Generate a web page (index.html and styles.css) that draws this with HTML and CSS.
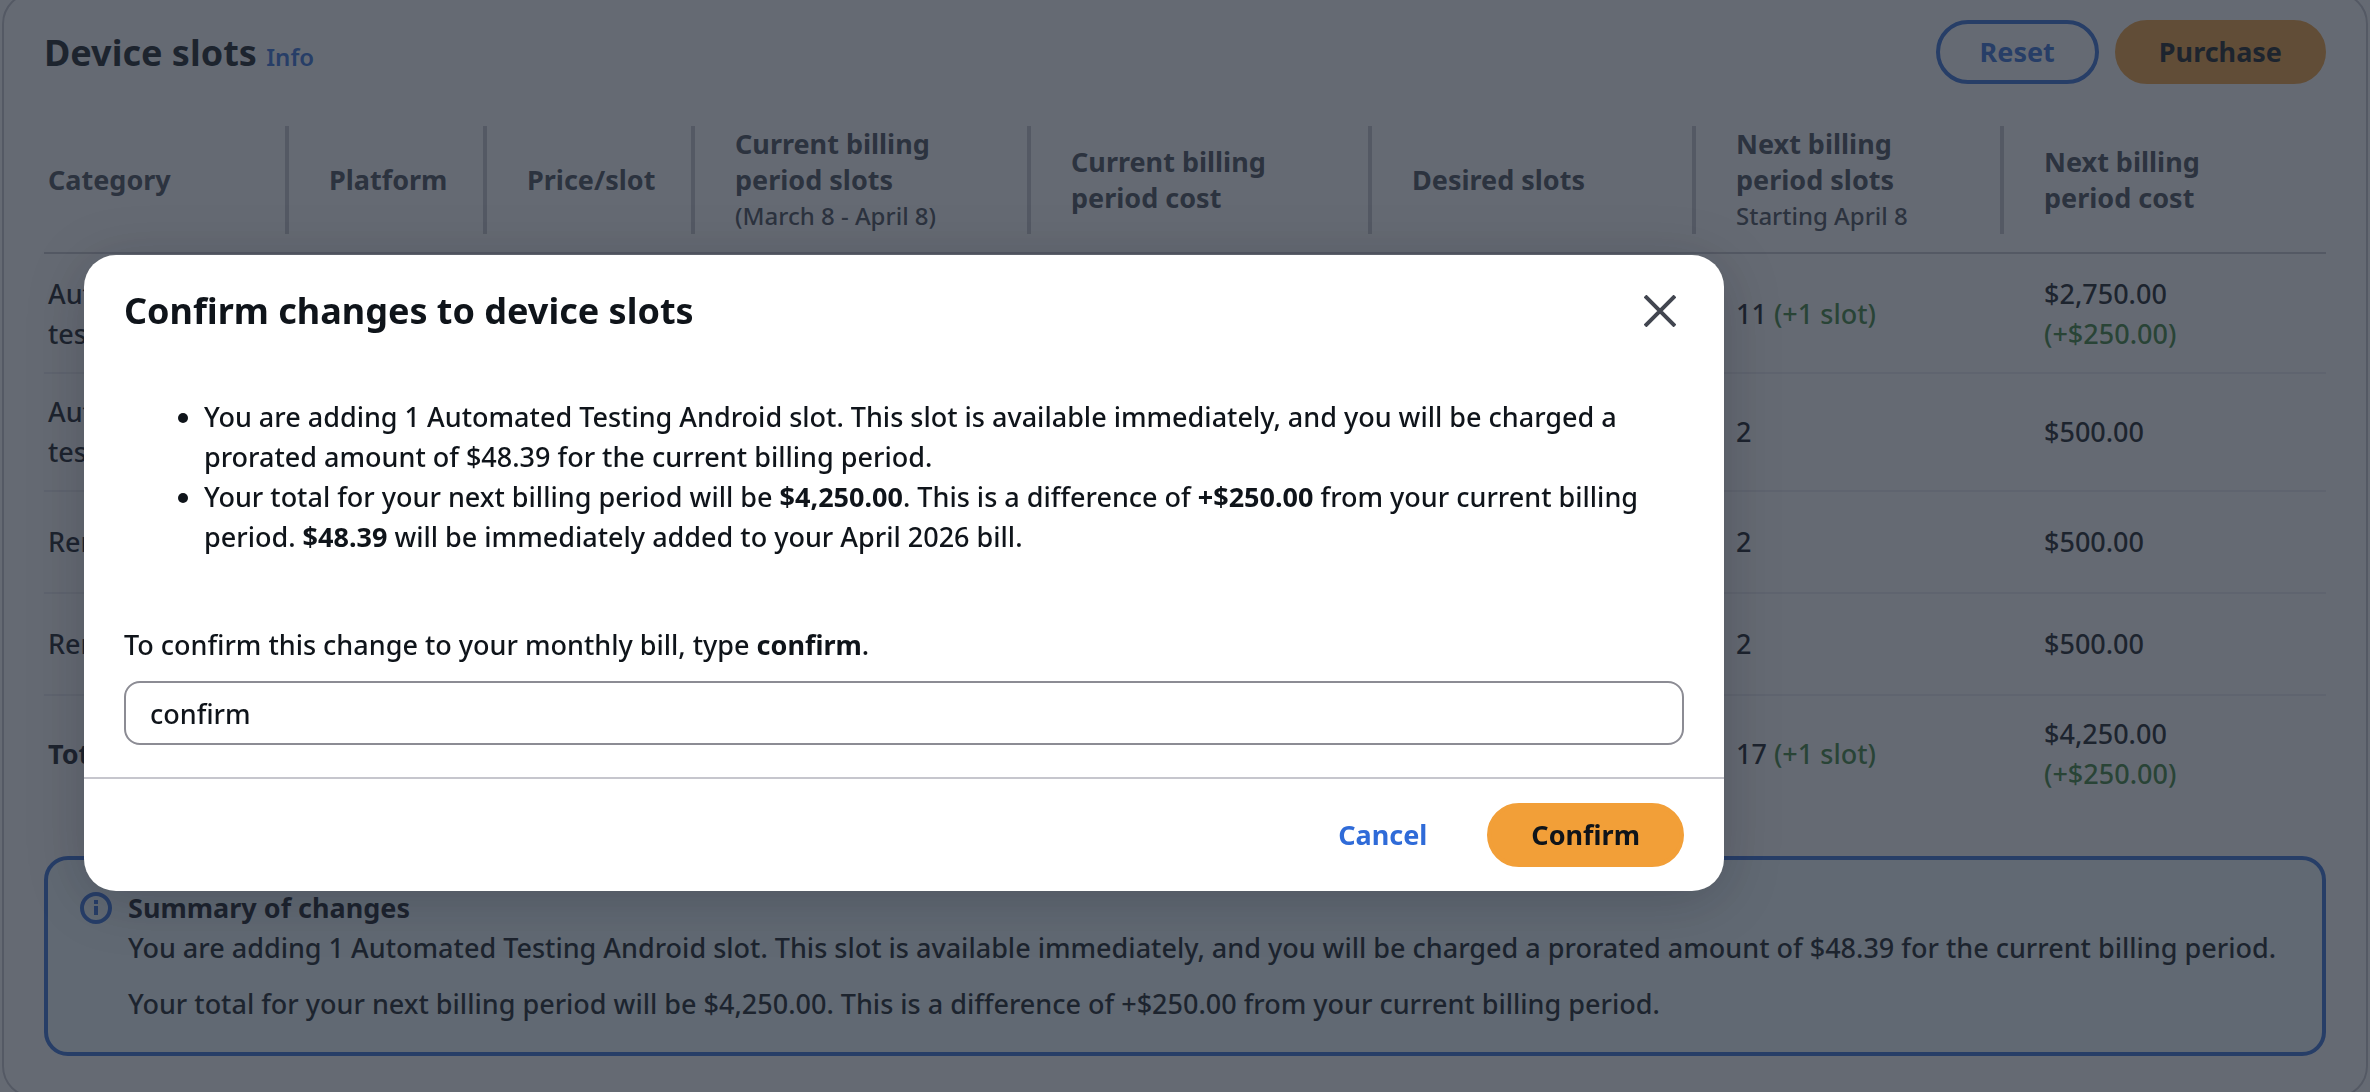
FILE: index.html
```html
<!DOCTYPE html>
<html lang="en">
<head>
    <meta charset="UTF-8">
    <meta name="viewport" content="width=device-width, initial-scale=1.0">
    <title>Device slots</title>
    <link rel="stylesheet" href="styles.css">
</head>
<body>
    <main class="card">
        <div class="card-header">
            <h1>Device slots <a href="#" class="info">Info</a></h1>
            <div class="actions">
                <button type="button" class="btn btn-normal">Reset</button>
                <button type="button" class="btn btn-primary">Purchase</button>
            </div>
        </div>

        <table class="slots">
            <colgroup>
                <col class="col-category">
                <col class="col-platform">
                <col class="col-price">
                <col class="col-current-slots">
                <col class="col-current-cost">
                <col class="col-desired">
                <col class="col-next-slots">
                <col class="col-next-cost">
            </colgroup>
            <thead>
                <tr>
                    <th><div class="head">Category</div></th>
                    <th><div class="head">Platform</div></th>
                    <th><div class="head">Price/slot</div></th>
                    <th><div class="head">Current billing<br>period slots<small>(March 8 - April 8)</small></div></th>
                    <th><div class="head">Current billing<br>period cost</div></th>
                    <th><div class="head">Desired slots</div></th>
                    <th><div class="head">Next billing<br>period slots<small>Starting April 8</small></div></th>
                    <th><div class="head">Next billing<br>period cost</div></th>
                </tr>
            </thead>
            <tbody>
                <tr>
                    <td>Automated<br>testing</td>
                    <td></td>
                    <td></td>
                    <td></td>
                    <td></td>
                    <td></td>
                    <td>11 <span class="added">(+1 slot)</span></td>
                    <td>$2,750.00<br><span class="added">(+$250.00)</span></td>
                </tr>
                <tr>
                    <td>Automated<br>testing</td>
                    <td></td>
                    <td></td>
                    <td></td>
                    <td></td>
                    <td></td>
                    <td>2</td>
                    <td>$500.00</td>
                </tr>
                <tr>
                    <td>Remote access</td>
                    <td></td>
                    <td></td>
                    <td></td>
                    <td></td>
                    <td></td>
                    <td>2</td>
                    <td>$500.00</td>
                </tr>
                <tr>
                    <td>Remote access</td>
                    <td></td>
                    <td></td>
                    <td></td>
                    <td></td>
                    <td></td>
                    <td>2</td>
                    <td>$500.00</td>
                </tr>
                <tr>
                    <td><b>Total</b></td>
                    <td></td>
                    <td></td>
                    <td></td>
                    <td></td>
                    <td></td>
                    <td>17 <span class="added">(+1 slot)</span></td>
                    <td>$4,250.00<br><span class="added">(+$250.00)</span></td>
                </tr>
            </tbody>
        </table>

        <section class="summary">
            <svg class="summary-icon" viewBox="0 0 32 32" fill="none" stroke="currentColor" stroke-width="4" aria-hidden="true">
                <circle cx="16" cy="16" r="14"/>
                <path d="M16 14v9M16 8v4"/>
            </svg>
            <div>
                <h2>Summary of changes</h2>
                <p>You are adding 1 Automated Testing Android slot. This slot is available immediately, and you will be charged a prorated amount of $48.39 for the current billing period.</p>
                <p>Your total for your next billing period will be $4,250.00. This is a difference of +$250.00 from your current billing period.</p>
            </div>
        </section>
    </main>

    <div class="overlay">
        <div class="modal" role="dialog" aria-modal="true" aria-labelledby="modal-title">
            <div class="modal-header">
                <h2 id="modal-title">Confirm changes to device slots</h2>
                <button type="button" class="close" aria-label="Close">
                    <svg viewBox="0 0 32 32" fill="none" stroke="currentColor" stroke-width="4" aria-hidden="true">
                        <path d="M1 1l30 30M31 1L1 31"/>
                    </svg>
                </button>
            </div>
            <div class="modal-body">
                <ul>
                    <li>You are adding 1 Automated Testing Android slot. This slot is available immediately, and you will be charged a prorated amount of $48.39 for the current billing period.</li>
                    <li>Your total for your next billing period will be <b>$4,250.00</b>. This is a difference of <b>+$250.00</b> from your current billing period. <b>$48.39</b> will be immediately added to your April 2026 bill.</li>
                </ul>
                <label for="confirm">To confirm this change to your monthly bill, type <b>confirm</b>.</label>
                <input type="text" id="confirm" class="field" value="confirm">
            </div>
            <div class="modal-footer">
                <button type="button" class="btn btn-link">Cancel</button>
                <button type="button" class="btn btn-primary">Confirm</button>
            </div>
        </div>
    </div>
</body>
</html>
```
FILE: styles.css
```css
* {
    box-sizing: border-box;
}
body {
    margin: 0;
    overflow: hidden;
    background: #fff;
    color: #0f141a;
    font-family: "Noto Sans", "Open Sans", sans-serif;
    font-size: 27px;
    font-weight: 500;
    line-height: 40px;
}
h1, h2, p {
    margin: 0;
}
b, h1, h2 {
    font-weight: 700;
}
.card {
    margin: -8px 2px 0;
    padding: 26px 40px 40px;
    border: 2px solid #c6c6cd;
    border-radius: 32px;
}
.card-header {
    display: flex;
    justify-content: space-between;
    align-items: center;
}
h1, .modal-header h2 {
    font-size: 36px;
    line-height: 44px;
}
h1 {
    padding-top: 6px;
}
.info {
    color: #2f6bd8;
    font-size: 24px;
    font-weight: 600;
    text-decoration: none;
}
.actions {
    display: flex;
    gap: 16px;
}
.btn {
    height: 64px;
    padding: 0 40px;
    border: 4px solid transparent;
    border-radius: 32px;
    background: transparent;
    color: #2f6bd8;
    font: inherit;
    font-weight: 700;
    cursor: pointer;
}
.btn-normal {
    border-color: #2f6bd8;
}
.btn-primary {
    border-color: #f29f38;
    background: #f29f38;
    color: #0f141a;
}

/* slots table */
.slots {
    width: 100%;
    margin-top: 24px;
    table-layout: fixed;
    border-collapse: separate;
    border-spacing: 0;
}
.col-category { width: 245px; }
.col-platform { width: 198px; }
.col-price { width: 208px; }
.col-current-slots { width: 336px; }
.col-current-cost { width: 341px; }
.col-desired { width: 324px; }
.col-next-slots { width: 308px; }
.col-next-cost { width: 322px; }
.slots th {
    padding: 18px 0;
    border-bottom: 2px solid #c6c6cd;
    color: #424650;
    text-align: left;
    line-height: 36px;
}
.head {
    display: flex;
    flex-direction: column;
    justify-content: center;
    height: 108px;
    padding-left: 40px;
    border-right: 4px solid #c6c6cd;
}
.slots th:last-child .head {
    border-right: none;
}
.head small {
    font-size: 24px;
    font-weight: 500;
}
.slots td {
    height: 102px;
    padding: 18px 0 18px 40px;
    border-bottom: 2px solid #ebebf0;
    white-space: nowrap;
}
.slots tbody tr:first-child td {
    border-top: 2px solid transparent;
}
.slots tbody tr:last-child td {
    border-bottom-color: transparent;
}
.slots th:first-child .head, .slots td:first-child {
    padding-left: 4px;
}
.added {
    color: #387f35;
}

.summary {
    display: flex;
    gap: 16px;
    margin-top: 42px;
    padding: 28px 32px;
    border: 4px solid #2f6bd8;
    border-radius: 24px;
    background: #f0fbff;
}
.summary-icon {
    flex: none;
    width: 32px;
    height: 32px;
    margin-top: 4px;
    color: #2f6bd8;
}
.summary h2 {
    font-size: 27px;
}
.summary p + p {
    margin-top: 16px;
}

/* confirmation dialog */
.overlay {
    position: fixed;
    inset: 0;
    padding: 255px 84px 0;
    background: rgba(35, 43, 55, 0.7);
}
.modal {
    max-width: 1640px;
    border-radius: 32px;
    background: #fff;
    box-shadow: 0 8px 60px rgba(0, 7, 22, 0.2);
}
.modal-header {
    display: flex;
    justify-content: space-between;
    align-items: center;
    padding: 34px 40px 0;
}
.close {
    display: flex;
    padding: 0 8px;
    border: none;
    background: none;
    color: #424650;
    cursor: pointer;
}
.close svg {
    width: 32px;
    height: 32px;
}
.modal-body {
    padding: 64px 40px 32px;
}
.modal-body ul {
    margin: 0 0 68px;
    padding-left: 80px;
}
.modal-body label {
    display: block;
    margin-bottom: 16px;
}
.field {
    display: block;
    width: 100%;
    height: 64px;
    padding: 0 24px;
    border: 2px solid #8c8c94;
    border-radius: 16px;
    background: #fff;
    color: #0f141a;
    font: inherit;
}
.modal-footer {
    display: flex;
    justify-content: flex-end;
    gap: 16px;
    padding: 24px 40px;
    border-top: 2px solid #c6c6cd;
}
```
